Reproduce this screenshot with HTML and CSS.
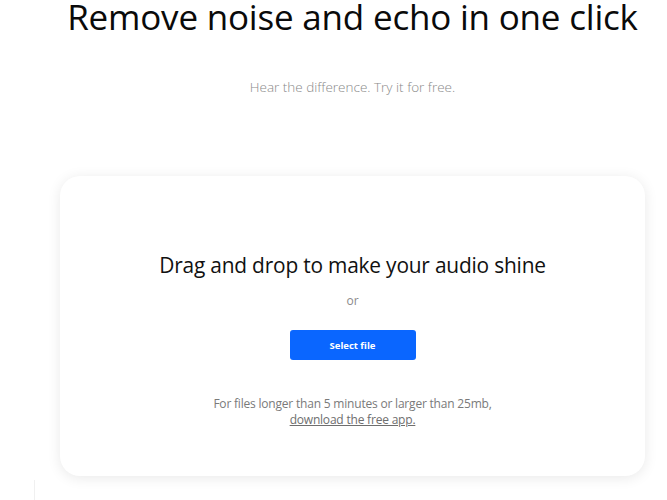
FILE: index.html
```html
<!DOCTYPE html>
<html lang="en">
<head>
<meta charset="utf-8">
<title>Remove noise and echo</title>
<link rel="stylesheet" href="styles.css">
</head>
<body>
<main class="page">
  <h1 class="title">Remove noise and echo in one click</h1>
  <p class="subtitle">Hear the difference. Try it for free.</p>
  <section class="card">
    <h2 class="drop-title">Drag and drop to make your audio shine</h2>
    <p class="or">or</p>
    <button class="select-btn" type="button">Select file</button>
    <p class="note">For files longer than 5 minutes or larger than 25mb,<br><a class="note-link" href="#">download the free app.</a></p>
  </section>
  <div class="edge-line"></div>
</main>
</body>
</html>
```
FILE: styles.css
```css
html, body {
  margin: 0;
  padding: 0;
  background: #ffffff;
}
body {
  font-family: "Open Sans", "Noto Sans", "DejaVu Sans", sans-serif;
  color: #111;
  overflow: hidden;
  height: 500px;
}
.page {
  width: 585px;
  margin-left: 60px;
  display: flex;
  flex-direction: column;
  align-items: center;
  position: relative;
}
.title {
  margin: -5px 0 0 0;
  font-size: 35px;
  font-weight: 400;
  line-height: 44px;
  letter-spacing: -0.2px;
  white-space: nowrap;
  color: #0a0a0a;
}
.subtitle {
  margin: 38px 0 0 0;
  font-size: 13.5px;
  font-weight: 300;
  color: #8a8a8a;
  line-height: 20px;
}
.card {
  margin-top: 79px;
  width: 585px;
  height: 300px;
  box-sizing: border-box;
  border-radius: 20px;
  background: #fff;
  box-shadow: 0 2px 14px rgba(0, 0, 0, 0.09);
  display: flex;
  flex-direction: column;
  align-items: center;
  padding-top: 75px;
}
.drop-title {
  margin: 0;
  font-size: 20.9px;
  font-weight: 400;
  line-height: 28px;
  color: #111;
  letter-spacing: -0.2px;
}
.or {
  margin: 14px 0 0 0;
  font-size: 12px;
  color: #8a8a8a;
  line-height: 16px;
}
.select-btn {
  margin-top: 21px;
  width: 126px;
  height: 30px;
  border: none;
  border-radius: 3px;
  background: #0a66ff;
  color: #fff;
  font-family: inherit;
  font-size: 9.5px;
  font-weight: 700;
  cursor: pointer;
}
.note {
  margin: 36px 0 0 0;
  font-size: 12px;
  line-height: 16px;
  color: #7a7a7a;
  text-align: center;
  letter-spacing: -0.2px;
}
.note-link {
  color: #6e6e6e;
  text-decoration: underline;
}
.edge-line {
  position: absolute;
  left: -26px;
  top: 480px;
  width: 1px;
  height: 30px;
  background: #f0f0f0;
}
```
